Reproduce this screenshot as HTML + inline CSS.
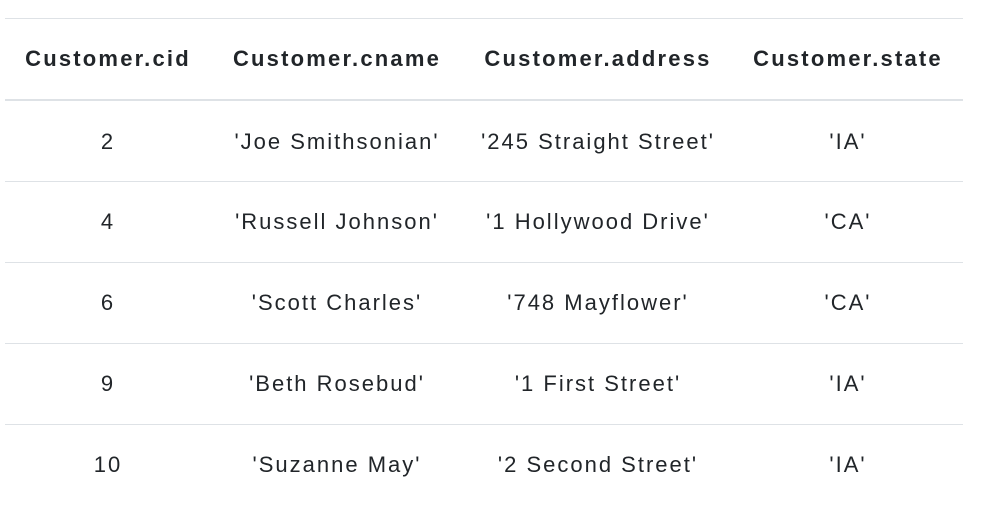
<!DOCTYPE html>
<html><head><style>
body{margin:0;background:#fff;font-family:"Liberation Sans",Arial,sans-serif;color:#212529;}
.l{position:absolute;left:5px;width:958px;background:#dee2e6;}
.r{position:absolute;left:5px;width:958px;display:flex;font-size:22px;letter-spacing:2px;}
.r div{text-align:center;}
.c1{width:206px}.c2{width:252px}.c3{width:270px}.c4{width:230px}
.h{font-weight:bold;letter-spacing:2.2px;}
</style></head><body>
<div class="l" style="top:18px;height:1px"></div>
<div class="l" style="top:99px;height:2px"></div>
<div class="l" style="top:181px;height:1px"></div>
<div class="l" style="top:262px;height:1px"></div>
<div class="l" style="top:343px;height:1px"></div>
<div class="l" style="top:424px;height:1px"></div>
<div class="r h" style="top:46px"><div class="c1">Customer.cid</div><div class="c2">Customer.cname</div><div class="c3">Customer.address</div><div class="c4">Customer.state</div></div>
<div class="r" style="top:129px"><div class="c1">2</div><div class="c2">'Joe Smithsonian'</div><div class="c3">'245 Straight Street'</div><div class="c4">'IA'</div></div>
<div class="r" style="top:209px"><div class="c1">4</div><div class="c2">'Russell Johnson'</div><div class="c3">'1 Hollywood Drive'</div><div class="c4">'CA'</div></div>
<div class="r" style="top:290px"><div class="c1">6</div><div class="c2">'Scott Charles'</div><div class="c3">'748 Mayflower'</div><div class="c4">'CA'</div></div>
<div class="r" style="top:371px"><div class="c1">9</div><div class="c2">'Beth Rosebud'</div><div class="c3">'1 First Street'</div><div class="c4">'IA'</div></div>
<div class="r" style="top:452px"><div class="c1">10</div><div class="c2">'Suzanne May'</div><div class="c3">'2 Second Street'</div><div class="c4">'IA'</div></div>
</body></html>
